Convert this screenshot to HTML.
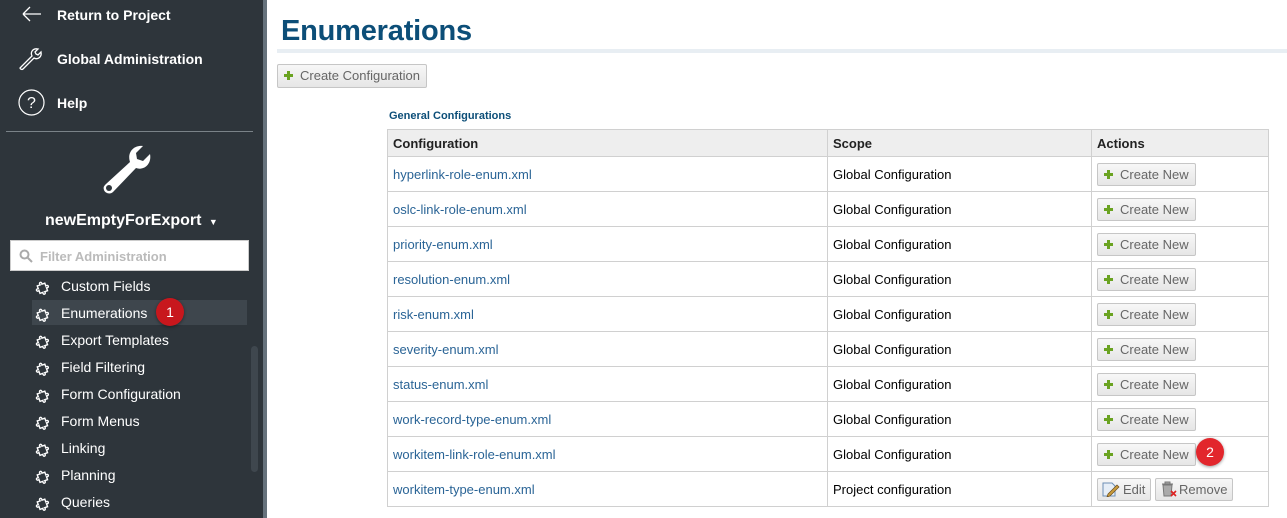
<!DOCTYPE html>
<html><head><meta charset="utf-8"><style>
*{box-sizing:border-box;margin:0;padding:0}
body{width:1287px;height:518px;overflow:hidden;background:#fff;font-family:"Liberation Sans",sans-serif;position:relative}
.sb{position:absolute;left:0;top:0;width:263px;height:518px;background:#2e353b;color:#fff}
.sb2{position:absolute;left:263px;top:0;width:4px;height:518px;background:#66727c}
.ab{position:absolute}
.nav{position:absolute;left:57px;font-weight:bold;font-size:14px;color:#fff}
.item{position:absolute;left:61px;font-size:14px;color:#fff}
.pz{position:absolute;left:35px}
.tbl{position:absolute;left:387px;top:129px;border-collapse:collapse;font-size:13px}
.tbl td,.tbl th{border:1px solid #d0d0d0;height:35px;padding:0 5px;text-align:left;vertical-align:middle}
.tbl th{background:#eeeeee;height:28px;font-weight:bold;color:#222;font-size:13px}
.tbl a{color:#2a6496;text-decoration:none}
.btn{display:inline-block;height:23px;line-height:21px;border:1px solid #c6c6c6;border-radius:2px;background:linear-gradient(#f7f7f7,#e6e6e6);color:#666;font-size:13px;padding:0 6px 0 6px;vertical-align:middle}
.plus{display:inline-block;width:9px;height:9px;position:relative;margin-right:7px;vertical-align:0px}
.plus:before{content:"";position:absolute;left:3px;top:0;width:3px;height:9px;background:#6aa321}
.plus:after{content:"";position:absolute;left:0;top:3px;width:9px;height:3px;background:#6aa321}
.badge{position:absolute;width:28px;height:28px;border-radius:50%;background:#c8171d;color:#fff;font-size:14px;text-align:center;line-height:28px;box-shadow:0 1px 3px rgba(0,0,0,.4)}
</style></head><body>
<div class="sb">
<svg class="ab" style="left:22px;top:6px" width="20" height="16"><path d="M1 8H19M1 8L8 1M1 8L8 15" stroke="#fff" stroke-width="1.3" fill="none"/></svg>
<div class="nav" style="top:7px">Return to Project</div>
<svg class="ab" style="left:18px;top:46px" width="26" height="26" viewBox="0 0 26 26"><path d="M3 21L14 10C12 6 15 2 20 3L17 6 18 8 20 9 23 6C24 11 20 14 16 12L5 23C4 24 2 23 2 22Z" stroke="#fff" stroke-width="1.3" fill="none"/></svg>
<div class="nav" style="top:51px">Global Administration</div>
<svg class="ab" style="left:18px;top:89px" width="27" height="27"><circle cx="13.5" cy="13.5" r="12.5" stroke="#fff" stroke-width="1.2" fill="none"/><text x="13.5" y="19" font-size="16" fill="#fff" text-anchor="middle" font-family="Liberation Sans">?</text></svg>
<div class="nav" style="top:95px">Help</div>
<div class="ab" style="left:6px;top:131px;width:247px;height:1px;background:#7a8288"></div>
<svg class="ab" style="left:100px;top:140px" width="58" height="58" viewBox="0 0 58 58"><path d="M6 44L30 22C27 13 33 5 43 6L36 13 37 19 43 21 50 14C52 24 44 31 36 28L13 52C10 55 5 53 4 50 3 47 4 46 6 44Z" fill="#fff"/><circle cx="9" cy="48" r="3" fill="#2e353b"/></svg>
<div class="ab" style="left:45px;top:212px;font-weight:bold;font-size:16px;color:#fff">newEmptyForExport <span style="font-size:9px;margin-left:3px">▼</span></div>
<div class="ab" style="left:10px;top:240px;width:239px;height:31px;background:#fff;border:1px solid #ccc"></div>
<svg class="ab" style="left:19px;top:249px" width="14" height="14"><circle cx="5.5" cy="5.5" r="4" stroke="#aaa" stroke-width="2" fill="none"/><path d="M8.5 8.5L13 13" stroke="#aaa" stroke-width="2"/></svg>
<div class="ab" style="left:40px;top:249px;font-size:13px;font-weight:bold;color:#bbb">Filter Administration</div>
<div class="ab" style="left:32px;top:300px;width:215px;height:25px;background:#3e464d"></div>
<div class="ab" style="left:251px;top:346px;width:7px;height:126px;border-radius:4px;background:#3f474e"></div>
</div>
<div class="sb2"></div>
<div id="items"></div>
<div class="badge" style="left:156px;top:298px">1</div>
<div class="ab" style="left:281px;top:15px;font-size:29px;font-weight:bold;color:#0c4e78;letter-spacing:-0.2px">Enumerations</div>
<div class="ab" style="left:277px;top:49px;width:1010px;height:4px;background:#e8eef3"></div>
<div class="ab" style="left:277px;top:64px"><span class="btn" style="height:24px;line-height:22px;padding:0 6px"><span class="plus"></span>Create Configuration</span></div>
<div class="ab" style="left:389px;top:110px;font-size:11px;font-weight:bold;color:#0c4e78">General Configurations</div>
<table class="tbl">
<tr><th style="width:440px;height:27px">Configuration</th><th style="width:264px;height:27px">Scope</th><th style="width:177px;height:27px">Actions</th></tr>
<tr><td><a>hyperlink-role-enum.xml</a></td><td>Global Configuration</td><td><span class="btn"><span class="plus"></span>Create New</span></td></tr>
<tr><td><a>oslc-link-role-enum.xml</a></td><td>Global Configuration</td><td><span class="btn"><span class="plus"></span>Create New</span></td></tr>
<tr><td><a>priority-enum.xml</a></td><td>Global Configuration</td><td><span class="btn"><span class="plus"></span>Create New</span></td></tr>
<tr><td><a>resolution-enum.xml</a></td><td>Global Configuration</td><td><span class="btn"><span class="plus"></span>Create New</span></td></tr>
<tr><td><a>risk-enum.xml</a></td><td>Global Configuration</td><td><span class="btn"><span class="plus"></span>Create New</span></td></tr>
<tr><td><a>severity-enum.xml</a></td><td>Global Configuration</td><td><span class="btn"><span class="plus"></span>Create New</span></td></tr>
<tr><td><a>status-enum.xml</a></td><td>Global Configuration</td><td><span class="btn"><span class="plus"></span>Create New</span></td></tr>
<tr><td><a>work-record-type-enum.xml</a></td><td>Global Configuration</td><td><span class="btn"><span class="plus"></span>Create New</span></td></tr>
<tr><td><a>workitem-link-role-enum.xml</a></td><td>Global Configuration</td><td><span class="btn"><span class="plus"></span>Create New</span></td></tr>
<tr><td><a>workitem-type-enum.xml</a></td><td>Project configuration</td><td><span class="btn" style="padding:0 5px 0 3px"><svg width="20" height="16" style="vertical-align:-3px;margin-right:2px"><path d="M2 2H11L14 5V15H2Z" fill="#e6eef7" stroke="#6d8fb5"/><path d="M7 13L16 4 18 6 9 15 6 16Z" fill="#c89b3c" stroke="#6a4b1c" stroke-width=".7"/></svg>Edit</span> <span class="btn" style="padding:0 5px 0 4px"><svg width="18" height="16" style="vertical-align:-3px;margin-right:1px"><path d="M2 3H13M5 3V1H10V3M3 4H12L11 15H4Z" fill="#aaa" stroke="#777"/><path d="M11 10L16 15M16 10L11 15" stroke="#d22" stroke-width="1.6"/></svg>Remove</span></td></tr>
</table>
<div class="badge" style="left:1196px;top:438px;background:#e2262c">2</div>
<script>
var n=["Custom Fields","Enumerations","Export Templates","Field Filtering","Form Configuration","Form Menus","Linking","Planning","Queries"],h="";
for(var i=0;i<n.length;i++){var y=278+i*27;
h+='<svg class="pz" style="top:'+(y+1)+'px" width="16" height="16" viewBox="0 0 16 16"><path d="M3 5H6C5 2 9 2 8 5H11V8C14 7 14 11 11 10V13H8C9 16 5 16 6 13H3V10C0 11 0 7 3 8Z" stroke="#fff" stroke-width="1.4" fill="none" transform="rotate(-20 8 8)"/></svg><div class="item" style="top:'+y+'px">'+n[i]+'</div>';}
document.getElementById("items").innerHTML=h;
</script>
</body></html>
